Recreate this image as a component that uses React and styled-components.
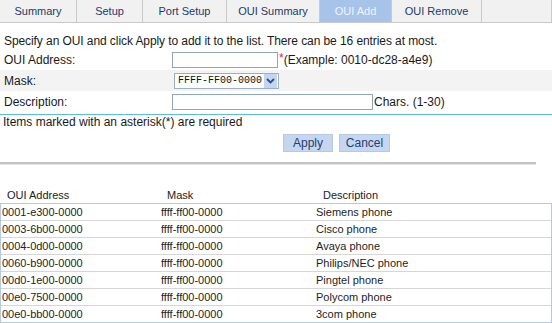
import React from "react";
import styled, { createGlobalStyle } from "styled-components";

const GlobalStyle = createGlobalStyle`
  body {
    margin: 0;
    background: #ffffff;
    font-family: "Liberation Sans", Arial, sans-serif;
    font-size: 12px;
    color: #1a1a1a;
  }
`;

const Page = styled.div`
  width: 552px;
  height: 323px;
  overflow: hidden;
  background: #fff;
`;

const TabBar = styled.div`
  display: flex;
  height: 22px;
  background: #f1f1f1;
  border-bottom: 1px solid #c9c9c9;
`;

const Tab = styled.div`
  width: ${(p) => p.$w}px;
  flex: ${(p) => (p.$w ? "none" : "1")};
  box-sizing: border-box;
  border-right: 1px solid #c9c9c9;
  display: flex;
  align-items: center;
  justify-content: center;
  font-size: 11px;
  color: ${(p) => (p.$active ? "#eef4fc" : "#233a6b")};
  background: ${(p) => (p.$active ? "#a7c3e9" : "transparent")};
`;

const Intro = styled.div`
  padding: 10px 0 0 4px;
  height: 16px;
  line-height: 16px;
  letter-spacing: -0.08px;
`;

const FormRow = styled.div`
  display: flex;
  align-items: center;
  height: 21px;
  padding-left: 4px;
  background: ${(p) => (p.$shaded ? "#f3f3f3" : "transparent")};
`;

const Label = styled.div`
  width: 168px;
`;

const TextInput = styled.div`
  width: ${(p) => p.$w}px;
  height: 16px;
  box-sizing: border-box;
  border: 1px solid #8fa5bf;
  background: #fff;
`;

const Star = styled.span`
  color: #e0203a;
  margin-left: 1px;
  align-self: flex-start;
  margin-top: 4px;
  line-height: 10px;
`;

const Hint = styled.span`
  margin-left: ${(p) => p.$gap || 0}px;
`;

const Select = styled.div`
  margin-left: 2px;
  width: 105px;
  height: 16px;
  box-sizing: border-box;
  border: 1px solid #9aaec8;
  background: #fff;
  display: flex;
  align-items: center;
  justify-content: space-between;
  white-space: nowrap;
  font-family: "Liberation Mono", "Courier New", monospace;
  font-size: 10px;
  color: #111;
  padding-left: 3px;
`;

const Arrow = styled.div`
  width: 13px;
  height: 14px;
  margin-right: 1px;
  background: #c3d5f1;
  display: flex;
  align-items: center;
  justify-content: center;
`;

const BlueRule = styled.div`
  margin-top: 2px;
  height: 1px;
  background: #5bbbe6;
`;

const Note = styled.div`
  padding-left: 3px;
  height: 14px;
  line-height: 14px;
`;

const Buttons = styled.div`
  display: flex;
  gap: 6px;
  padding: 5px 0 0 283px;
`;

const Button = styled.div`
  width: ${(p) => p.$w}px;
  height: 18px;
  box-sizing: border-box;
  background: #c6d6f0;
  border: 1px solid #b6c8e6;
  color: #25406f;
  display: flex;
  align-items: center;
  justify-content: center;
  font-size: 12px;
`;

const GrayRule = styled.div`
  margin-top: 10px;
  width: 536px;
  height: 2px;
  background: #c3c3c3;
  border-bottom: 1px solid #e4e4e4;
`;

const Table = styled.div`
  margin-top: 23px;
  font-size: 11px;
`;

const HeadRow = styled.div`
  display: grid;
  grid-template-columns: 160px 155px 1fr;
  height: 14px;
  line-height: 14px;
  color: #222;
`;

const HeadCell = styled.div`
  padding-left: ${(p) => p.$pad}px;
`;

const Body = styled.div`
  margin-top: 1px;
  border: 1px solid #b9c9e0;
  width: 550px;
`;

const Row = styled.div`
  display: grid;
  grid-template-columns: 159px 155px 1fr;
  height: 16px;
  line-height: 16px;
  border-top: ${(p) => (p.$first ? "none" : "1px solid #d6d6d6")};
  padding-left: 1px;
  color: #1e1e1e;
`;

const tabs = [
  { name: "Summary", w: 77 },
  { name: "Setup", w: 66 },
  { name: "Port Setup", w: 84 },
  { name: "OUI Summary", w: 93 },
  { name: "OUI Add", w: 72, active: true },
  { name: "OUI Remove", w: 90 },
  { name: "" },
];

const rows = [
  ["0001-e300-0000", "Siemens phone"],
  ["0003-6b00-0000", "Cisco phone"],
  ["0004-0d00-0000", "Avaya phone"],
  ["0060-b900-0000", "Philips/NEC phone"],
  ["00d0-1e00-0000", "Pingtel phone"],
  ["00e0-7500-0000", "Polycom phone"],
  ["00e0-bb00-0000", "3com phone"],
];

export default function App() {
  return (
    <Page>
      <GlobalStyle />
      <TabBar>
        {tabs.map((t, i) => (
          <Tab key={i} $w={t.w} $active={t.active}>
            {t.name}
          </Tab>
        ))}
      </TabBar>
      <Intro>
        Specify an OUI and click Apply to add it to the list. There can be 16
        entries at most.
      </Intro>
      <FormRow>
        <Label>OUI Address:</Label>
        <TextInput $w={106} />
        <Star>*</Star>
        <Hint>(Example: 0010-dc28-a4e9)</Hint>
      </FormRow>
      <FormRow $shaded>
        <Label>Mask:</Label>
        <Select>
          FFFF-FF00-0000
          <Arrow>
            <svg width="9" height="6" viewBox="0 0 9 6">
              <path d="M1 1 L4.5 4.5 L8 1" fill="none" stroke="#2a4f8f" strokeWidth="1.8" />
            </svg>
          </Arrow>
        </Select>
      </FormRow>
      <FormRow>
        <Label>Description:</Label>
        <TextInput $w={201} />
        <Hint $gap={1}>Chars. (1-30)</Hint>
      </FormRow>
      <BlueRule />
      <Note>Items marked with an asterisk(*) are required</Note>
      <Buttons>
        <Button $w={50}>Apply</Button>
        <Button $w={51}>Cancel</Button>
      </Buttons>
      <GrayRule />
      <Table>
        <HeadRow>
          <HeadCell $pad={7}>OUI Address</HeadCell>
          <HeadCell $pad={7}>Mask</HeadCell>
          <HeadCell $pad={8}>Description</HeadCell>
        </HeadRow>
        <Body>
          {rows.map((r, i) => (
            <Row key={r[0]} $first={i === 0}>
              <div>{r[0]}</div>
              <div>ffff-ff00-0000</div>
              <div>{r[1]}</div>
            </Row>
          ))}
        </Body>
      </Table>
    </Page>
  );
}
